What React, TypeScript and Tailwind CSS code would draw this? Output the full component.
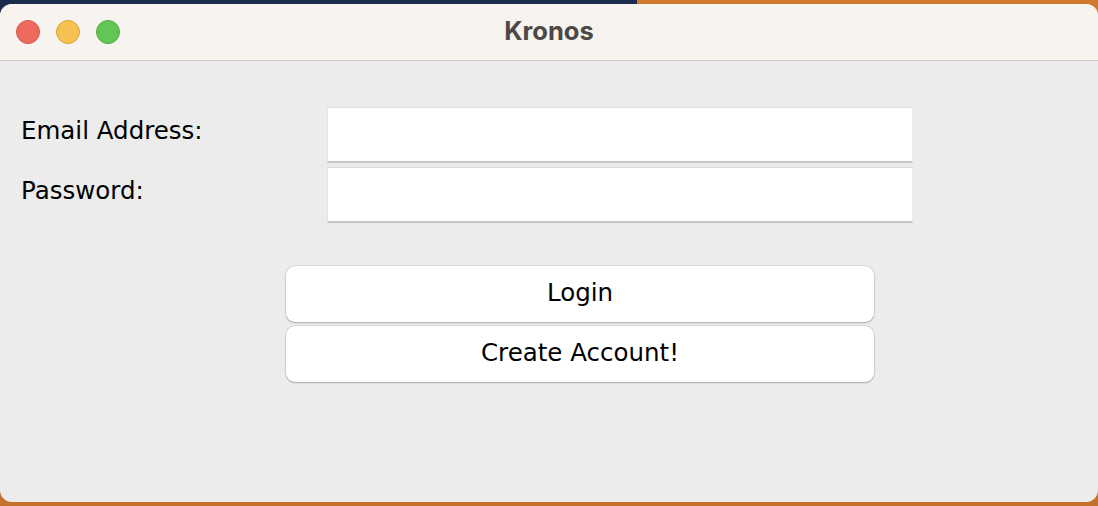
import React from "react";

const lights = [
  { id: "close", cls: "bg-[#ee6a5f] border-[#d5564b]" },
  { id: "min", cls: "bg-[#f5c150] border-[#d9a53a]" },
  { id: "max", cls: "bg-[#62c554] border-[#4faa42]" },
];

function Field({ label }: { label: string }) {
  return (
    <div className="flex items-center">
      <div className="w-[327px] h-[56px] flex items-center pl-[21px] pb-[8px] text-[24.5px] text-black">
        {label}
      </div>
      <div className="w-[586px] h-[56px] bg-white border-t border-l border-r border-t-[#dcdcdc] border-l-[#e4e4e4] border-r-[#ededed] border-b-2 border-b-[#c6c6c6]" />
    </div>
  );
}

function Button({ text }: { text: string }) {
  return (
    <button className="w-[588px] h-[56px] ml-[286px] bg-white rounded-[9px] text-[24.5px] text-black shadow-[0_0_0_0.5px_rgba(0,0,0,0.14),0_1px_2px_rgba(0,0,0,0.22)] pb-[2px]">
      {text}
    </button>
  );
}

export default function App() {
  return (
    <div
      className="w-[1098px] h-[506px] flex flex-col bg-[linear-gradient(to_bottom,transparent_0,transparent_24px,#c4712b_24px),linear-gradient(to_right,#1b2b4b_58%,#d0782c_58%)]"
      style={{ fontFamily: '"DejaVu Sans", Verdana, sans-serif' }}
    >
      <div className="mt-[4px] h-[498px] rounded-[12px] overflow-hidden flex flex-col bg-[#ececec]">
        {/* title bar */}
        <div className="h-[57px] shrink-0 bg-[#f7f3ef] border-b border-[#c9c7c5] grid grid-cols-[1fr_auto_1fr] items-center">
          <div className="flex items-center gap-[16px] pl-[16px]">
            {lights.map((l) => (
              <div key={l.id} className={`w-[24px] h-[24px] rounded-full border ${l.cls}`} />
            ))}
          </div>
          <div className="text-[25.5px] font-bold text-[#4b4846] pb-[1px] font-['Inter',sans-serif]">Kronos</div>
          <div />
        </div>

        {/* form */}
        <div className="flex flex-col pt-[46px]">
          <div className="flex flex-col gap-[4px]">
            <Field label="Email Address:" />
            <Field label="Password:" />
          </div>
          <div className="flex flex-col gap-[4px] mt-[43px]">
            <Button text="Login" />
            <Button text="Create Account!" />
          </div>
        </div>
      </div>
    </div>
  );
}
